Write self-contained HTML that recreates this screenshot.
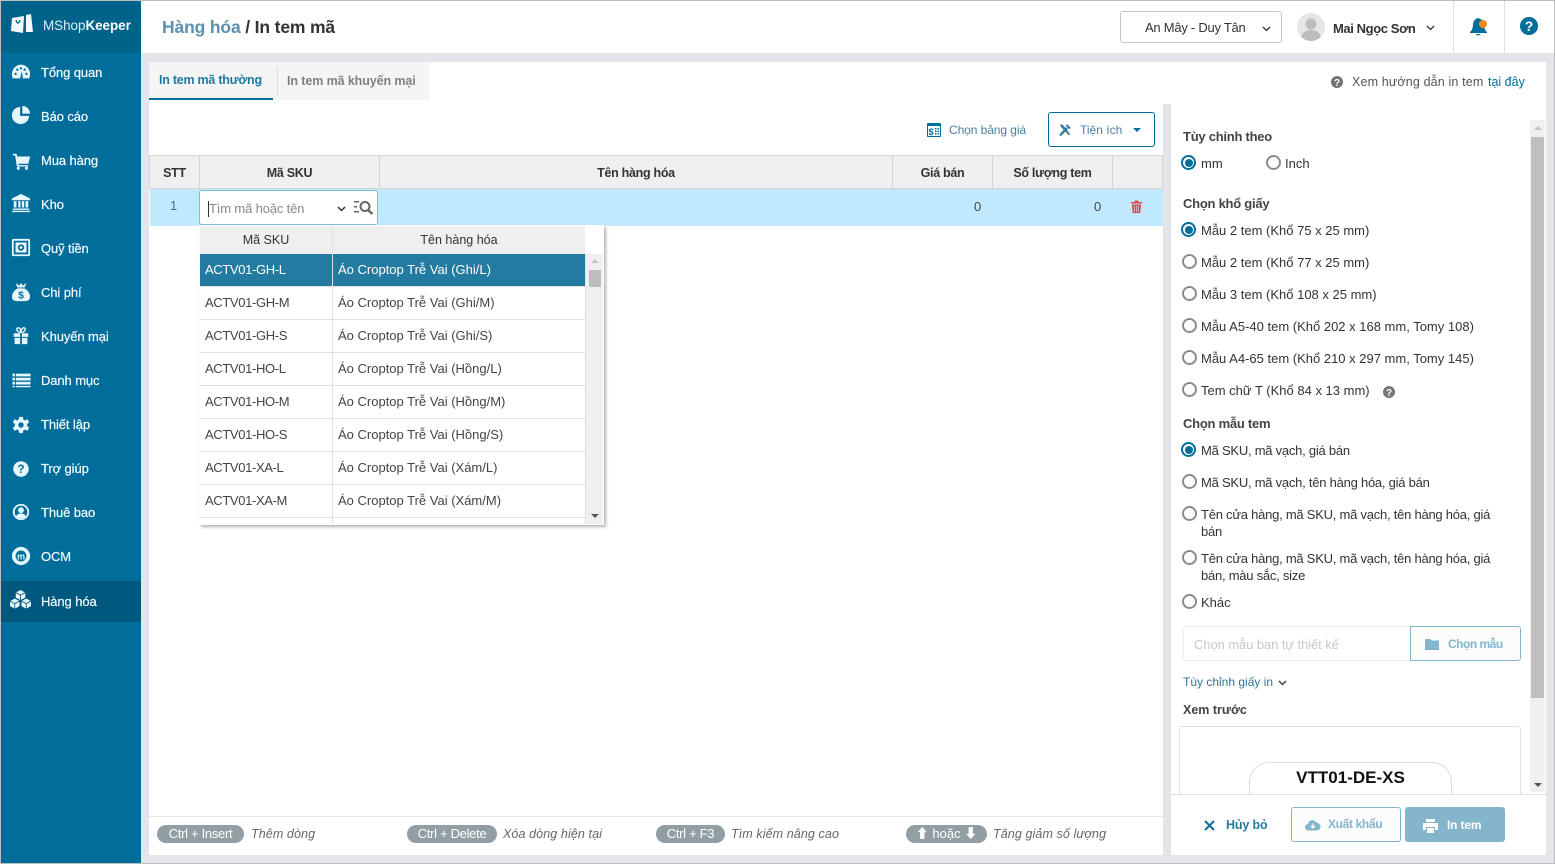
<!DOCTYPE html>
<html lang="vi"><head><meta charset="utf-8"><title>In tem mã</title>
<style>
*{box-sizing:border-box}
html,body{margin:0;padding:0;width:1555px;height:864px;overflow:hidden;background:#e3e5ea;font-family:"Liberation Sans","Noto Sans CJK SC",sans-serif;font-size:13px;color:#333}
.a{position:absolute}
.t{position:absolute;white-space:nowrap;line-height:16px}
.side{left:1px;top:1px;width:140px;height:862px;background:#016d9b}
.m{position:absolute;left:41px;color:#f2fbff;font-size:13px;line-height:16px;white-space:nowrap;letter-spacing:-.1px;-webkit-text-stroke:.2px #f2fbff}
.ic{position:absolute;left:11px;width:20px;height:20px;fill:#e6f7ff}
.b{font-weight:bold}
.r{position:absolute;left:1182px;width:15px;height:15px;border:2px solid #8c8c8c;border-radius:50%;background:#fff}
.r.on{border-color:#016d9b}
.r.on:after{content:"";position:absolute;left:1.500px;top:1.500px;width:8px;height:8px;border-radius:50%;background:#016d9b}
.rt{position:absolute;left:1201px;font-size:13px;line-height:17px;color:#333;white-space:nowrap}
.n{letter-spacing:-.24px}
.h{position:absolute;left:1183px;font-weight:bold;font-size:13px;color:#444;line-height:16px;white-space:nowrap;letter-spacing:-.25px}
.th{position:absolute;top:155px;height:34px;background:#efefef;border:1px solid #d4d4d4;border-left:0;text-align:center;font-weight:bold;font-size:12.5px;line-height:35px;color:#333;letter-spacing:-.3px}
.row{position:absolute;left:200px;width:385px;height:33px;border-bottom:1px solid #e0e0e0;color:#444;font-size:13px;line-height:31px;white-space:nowrap}
.row span{position:absolute;top:0}
.row .c1{left:5px;letter-spacing:-.36px}.row .c2{left:138px}
.key{position:absolute;top:825px;height:18px;border-radius:9px;background:#919fa5;color:#fff;font-size:13px;letter-spacing:-.3px;line-height:18px;text-align:center;white-space:nowrap}
.kt{position:absolute;top:825px;color:#666;font-style:italic;font-size:12.5px;letter-spacing:.1px;line-height:18px;white-space:nowrap}
</style></head><body>
<div class="a" style="left:0;top:0;width:1555px;height:864px;border:1px solid #bdbdbd;z-index:9;pointer-events:none"></div>

<!-- sidebar -->
<div class="a side"></div>
<div class="a" style="left:1px;top:1px;width:140px;height:52px;background:#006389"></div>
<svg class="a" style="left:11px;top:14px" width="23" height="20" viewBox="0 0 23 20"><path d="M1 4 L13 2 L12 19 L0 17 Z M15 1 L20 0 L22 18 L15 18 Z" fill="#f3fbff"/><path d="M5 6 Q7 12 9 6" stroke="#006389" stroke-width="1.300" fill="none"/></svg>
<div class="t" style="left:43px;top:18px;color:#dbeef7;font-size:13.4px">MShop<b style="color:#fff">Keeper</b></div>

<svg class="ic" style="top:62px" viewBox="0 0 22 22"><path d="M2 18 A10 10.500 0 1 1 20 18 Z"/><g fill="#016d9b"><circle cx="5" cy="13" r="1.300"/><circle cx="7" cy="8.500" r="1.300"/><circle cx="11" cy="7" r="1.300"/><circle cx="15" cy="8.500" r="1.300"/><circle cx="17" cy="13" r="1.300"/><path d="M10 18 L12 10 L13 18Z"/></g></svg>
<div class="m" style="top:65px">Tổng quan</div>
<svg class="ic" style="top:105px" viewBox="0 0 22 22"><path d="M10 2 V12 H20 A9.500 9.500 0 1 1 10 2Z"/><path d="M12.500 1 A9 9 0 0 1 21 9.500 H12.500Z"/></svg>
<div class="m" style="top:109px">Báo cáo</div>
<svg class="ic" style="top:151px" viewBox="0 0 22 22"><path d="M2 3 H6 L7 6 H21 L19 14 H8 L8.500 15.500 H19 V17 H6.500 L4.500 5 H2Z"/><circle cx="8" cy="19" r="1.700"/><circle cx="17" cy="19" r="1.700"/></svg>
<div class="m" style="top:153px">Mua hàng</div>
<svg class="ic" style="top:193px" viewBox="0 0 22 22"><path d="M11 1 L21 6 V8 H1 V6Z M3 9 H6 V16 H3Z M8 9 H10.500 V16 H8Z M12 9 H14.500 V16 H12Z M16 9 H19 V16 H16Z M2 17 H20 V18.500 H2Z M1 19.500 H21 V21 H1Z"/></svg>
<div class="m" style="top:197px">Kho</div>
<svg class="ic" style="top:238px" viewBox="0 0 22 22"><path fill-rule="evenodd" d="M3 1 H19 Q21 1 21 3 V18 Q21 20 19 20 H3 Q1 20 1 18 V3 Q1 1 3 1Z M3 3 V18 H19 V3Z"/><path fill-rule="evenodd" d="M5 5 H17 V16 H5Z M11 7 A3.500 3.500 0 1 0 11 14 A3.500 3.500 0 1 0 11 7Z M11 9 A1.500 1.500 0 1 1 11 12 A1.500 1.500 0 1 1 11 9Z"/></svg>
<div class="m" style="top:241px">Quỹ tiền</div>
<svg class="ic" style="top:282px" viewBox="0 0 22 22"><path d="M5 1 L9 4 L11 1 L13 4 L17 1 L15 6 H7Z"/><path d="M7 7 H15 Q21 11 21 16 Q21 21 16 21 H6 Q1 21 1 16 Q1 11 7 7Z"/><text x="11" y="18" font-size="11" font-weight="bold" text-anchor="middle" fill="#016d9b" font-family="Liberation Sans">$</text></svg>
<div class="m" style="top:285px">Chi phí</div>
<svg class="ic" style="top:326px" viewBox="0 0 22 22"><path d="M3 8 H10 V12 H3Z M12 8 H19 V12 H12Z M4 13 H10 V20 H4Z M12 13 H18 V20 H12Z"/><path d="M11 7 C6 7 5 2 8 2 C10 2 11 5 11 7 C11 5 12 2 14 2 C17 2 16 7 11 7Z" fill="none" stroke="#e6f7ff" stroke-width="1.600"/></svg>
<div class="m" style="top:329px">Khuyến mại</div>
<svg class="ic" style="top:370px;left:11px;width:21px" viewBox="0 0 22 22"><path d="M1 4 H4 V7 H1Z M5 4 H21 V7 H5Z M1 8.500 H4 V11.500 H1Z M5 8.500 H21 V11.500 H5Z M1 13 H4 V16 H1Z M5 13 H21 V16 H5Z"/><path d="M1 17.500 H4 V19 H1Z M5 17.500 H21 V19 H5Z"/></svg>
<div class="m" style="top:373px">Danh mục</div>
<svg class="ic" style="top:415px" viewBox="0 0 22 22"><path fill-rule="evenodd" d="M9 2 H13 L13.500 5 L15.500 6 L18 4.500 L20 8 L17.800 9.800 V12.200 L20 14 L18 17.500 L15.500 16 L13.500 17 L13 20 H9 L8.500 17 L6.500 16 L4 17.500 L2 14 L4.200 12.200 V9.800 L2 8 L4 4.500 L6.500 6 L8.500 5Z M11 8 A3 3 0 1 0 11 14 A3 3 0 1 0 11 8Z"/></svg>
<div class="m" style="top:417px">Thiết lập</div>
<svg class="ic" style="top:459px" viewBox="0 0 22 22"><circle cx="11" cy="11" r="8.500"/><text x="11" y="15.500" font-size="13" font-weight="bold" text-anchor="middle" fill="#016d9b" font-family="Liberation Sans">?</text></svg>
<div class="m" style="top:461px">Trợ giúp</div>
<svg class="ic" style="top:502px" viewBox="0 0 22 22"><circle cx="11" cy="11" r="8" fill="none" stroke="#e6f7ff" stroke-width="2"/><circle cx="11" cy="9" r="3.200"/><path d="M5.500 16 Q7 12.500 11 12.500 Q15 12.500 16.500 16 Q11 20 5.500 16Z"/></svg>
<div class="m" style="top:505px">Thuê bao</div>
<svg class="ic" style="top:546px" viewBox="0 0 22 22"><path fill-rule="evenodd" d="M11 1 A10 10 0 1 1 11 21 A10 10 0 1 1 11 1Z M11 5 A6 6 0 1 0 11 17 A6 6 0 1 0 11 5Z"/><text x="11" y="15" font-size="10" font-weight="bold" text-anchor="middle" font-family="Liberation Sans">m</text></svg>
<div class="m" style="top:549px">OCM</div>
<div class="a" style="left:1px;top:581px;width:140px;height:41px;background:#01587e"></div>
<svg class="ic" style="top:590px;left:9px;width:23px;height:19px" viewBox="0 0 23 20"><path d="M11.500 0 L16.500 2.700 V8 L11.500 10.700 L6.500 8 V2.700Z M5.500 9 L10.500 11.700 V17 L5.500 19.700 L0.500 17 V11.700Z M17.500 9 L22.500 11.700 V17 L17.500 19.700 L12.500 17 V11.700Z"/><path d="M6.500 2.700 L11.500 5.400 L16.500 2.700 M11.500 5.400 V10.700 M0.500 11.700 L5.500 14.400 L10.500 11.700 M5.500 14.400 V19.700 M12.500 11.700 L17.500 14.400 L22.500 11.700 M17.500 14.400 V19.700" stroke="#01587e" stroke-width=".9" fill="none"/></svg>
<div class="m" style="top:594px">Hàng hóa</div>

<!-- header -->
<div class="a" style="left:141px;top:1px;width:1413px;height:52px;background:#fff"></div>
<div class="t" style="left:162px;top:16px;font-size:17.5px;letter-spacing:-.15px;line-height:22px;font-weight:bold;color:#5c90ad">Hàng hóa <span style="color:#333">/ In tem mã</span></div>
<div class="a" style="left:1120px;top:11px;width:162px;height:32px;border:1px solid #c6c6c6;border-radius:3px"></div>
<div class="t" style="left:1145px;top:20px;color:#333;font-size:13px;letter-spacing:-.25px">An Mây - Duy Tân</div>
<svg class="a" style="left:1261px;top:25px" width="11" height="8"><path d="M2 2 L5.500 5.500 L9 2" fill="none" stroke="#333" stroke-width="1.300"/></svg>
<svg class="a" style="left:1297px;top:13px" width="28" height="28" viewBox="0 0 28 28"><circle cx="14" cy="14" r="14" fill="#e6e6e6"/><circle cx="14" cy="11" r="5.500" fill="#bdbdbd"/><path d="M4 24 Q6 17 14 17 Q22 17 24 24 Q14 32 4 24Z" fill="#bdbdbd"/></svg>
<div class="t" style="left:1333px;top:21px;font-weight:bold;color:#333;font-size:13px;letter-spacing:-.4px">Mai Ngọc Sơn</div>
<svg class="a" style="left:1425px;top:24px" width="11" height="8"><path d="M2 2 L5.500 5.500 L9 2" fill="none" stroke="#333" stroke-width="1.300"/></svg>
<div class="a" style="left:1453px;top:1px;width:1px;height:52px;background:#e0e0e0"></div>
<div class="a" style="left:1504px;top:1px;width:1px;height:52px;background:#e0e0e0"></div>
<svg class="a" style="left:1469px;top:17px" width="20" height="20" viewBox="0 0 20 20"><path d="M9 1 Q14 2 15 7 Q15 13 18 15 V16 H1 V15 Q4 13 4 7 Q5 2 9 1Z M6.500 17 H12 Q9 20 6.500 17Z" fill="#016d9b"/><circle cx="14" cy="7" r="4" fill="#f08a1c"/></svg>
<svg class="a" style="left:1520px;top:17px" width="18" height="18"><circle cx="9" cy="9" r="9" fill="#016d9b"/><text x="9" y="14" font-size="14" font-weight="bold" text-anchor="middle" fill="#fff" font-family="Liberation Sans">?</text></svg>

<!-- main panel -->
<div class="a" style="left:149px;top:62px;width:1014px;height:793px;background:#fff"></div>
<div class="a" style="left:1171px;top:104px;width:375px;height:751px;background:#fff"></div>
<div class="a" style="left:1163px;top:62px;width:383px;height:42px;background:#fff"></div>
<div class="a" style="left:149px;top:62px;width:281px;height:38px;background:#f5f5f5"></div>
<div class="a" style="left:149px;top:98px;width:124px;height:2px;background:#016d9b"></div>
<div class="a" style="left:277px;top:67px;width:1px;height:28px;background:#ddd"></div>
<div class="t" style="left:159px;top:72px;font-weight:bold;color:#1f7aa0;font-size:12.5px;letter-spacing:-.25px">In tem mã thường</div>
<div class="t" style="left:287px;top:73px;font-weight:bold;color:#808080;font-size:12.5px;letter-spacing:-.1px">In tem mã khuyến mại</div>
<svg class="a" style="left:1331px;top:76px" width="12" height="12"><circle cx="6" cy="6" r="6" fill="#757575"/><text x="6" y="10" font-size="10" font-weight="bold" text-anchor="middle" fill="#fff" font-family="Liberation Sans">?</text></svg>
<div class="t" style="left:1352px;top:74px;color:#555;font-size:12.5px;letter-spacing:.15px">Xem hướng dẫn in tem</div>
<div class="t" style="left:1488px;top:74px;color:#016d9b;font-size:12.5px">tại đây</div>

<svg class="a" style="left:927px;top:123px" width="14" height="14" viewBox="0 0 14 14"><path fill-rule="evenodd" d="M1 0 H13 Q14 0 14 1 V13 Q14 14 13 14 H1 Q0 14 0 13 V1 Q0 0 1 0Z M1 3 V13 H13 V3Z" fill="#016d9b"/><text x="4" y="12" font-size="9" font-weight="bold" text-anchor="middle" fill="#016d9b" font-family="Liberation Sans">$</text><path d="M8 5 H9.500 V6.500 H8Z M10.500 5 H12 V6.500 H10.500Z M8 7.500 H9.500 V9 H8Z M10.500 7.500 H12 V9 H10.500Z M8 10 H9.500 V11.500 H8Z M10.500 10 H12 V11.500 H10.500Z" fill="#016d9b"/></svg>
<div class="t" style="left:949px;top:122px;color:#47819f;font-size:12px;letter-spacing:-.08px">Chọn bảng giá</div>
<div class="a" style="left:1048px;top:112px;width:107px;height:35px;border:1px solid #016d9b;border-radius:3px"></div>
<svg class="a" style="left:1058px;top:123px" width="14" height="13" viewBox="0 0 14 13"><path d="M1 12 L8 4 L10 6 L3 13Z M9 1 L13 5 L11 6 L8 3Z M2 1 L5 2 L12 11 L11 12.500 L3 4Z" fill="#37799a"/></svg>
<div class="t" style="left:1080px;top:122px;color:#47819f;font-size:12px">Tiện ích</div>
<div class="a" style="left:1133px;top:128px;border:4px solid transparent;border-top:4px solid #016d9b;border-bottom:0"></div>

<!-- table -->
<div class="th" style="left:149px;width:51px;border-left:1px solid #d4d4d4">STT</div>
<div class="th" style="left:200px;width:180px">Mã SKU</div>
<div class="th" style="left:380px;width:513px">Tên hàng hóa</div>
<div class="th" style="left:893px;width:100px">Giá bán</div>
<div class="th" style="left:993px;width:120px">Số lượng tem</div>
<div class="th" style="left:1113px;width:50px"></div>
<div class="a" style="left:150px;top:189px;width:1013px;height:37px;background:#c1e9fd"></div>
<div class="t" style="left:170px;top:198px;color:#3f6f85;font-size:13px">1</div>
<div class="t" style="left:974px;top:199px;color:#444;font-size:13px">0</div>
<div class="t" style="left:1094px;top:199px;color:#444;font-size:13px">0</div>
<svg class="a" style="left:1131px;top:200px" width="11" height="13" viewBox="0 0 11 13"><path d="M0 2 H3.500 L4 0.500 H7 L7.500 2 H11 V3.500 H0Z M1 4.500 H10 L9.300 13 H1.700Z" fill="#e0424a"/><path d="M3.600 5.500 V12 M5.500 5.500 V12 M7.400 5.500 V12" stroke="#c1e9fd" stroke-width=".7"/></svg>

<!-- dropdown -->
<div class="a" style="left:199px;top:225px;width:405px;height:300px;background:#fff;box-shadow:2px 2px 3px rgba(0,0,0,.3)"></div>
<div class="a" style="left:200px;top:226px;width:385px;height:28px;background:#efefef"></div>
<div class="t" style="left:200px;top:232px;width:132px;text-align:center;color:#333;font-size:12.5px">Mã SKU</div>
<div class="t" style="left:333px;top:232px;width:252px;text-align:center;color:#333;font-size:12.5px">Tên hàng hóa</div>
<div class="row" style="top:254px;background:#237ba1;color:#fff"><span class="c1">ACTV01-GH-L</span><span class="c2">Áo Croptop Trễ Vai (Ghi/L)</span></div>
<div class="row" style="top:287px"><span class="c1">ACTV01-GH-M</span><span class="c2">Áo Croptop Trễ Vai (Ghi/M)</span></div>
<div class="row" style="top:320px"><span class="c1">ACTV01-GH-S</span><span class="c2">Áo Croptop Trễ Vai (Ghi/S)</span></div>
<div class="row" style="top:353px"><span class="c1">ACTV01-HO-L</span><span class="c2">Áo Croptop Trễ Vai (Hồng/L)</span></div>
<div class="row" style="top:386px"><span class="c1">ACTV01-HO-M</span><span class="c2">Áo Croptop Trễ Vai (Hồng/M)</span></div>
<div class="row" style="top:419px"><span class="c1">ACTV01-HO-S</span><span class="c2">Áo Croptop Trễ Vai (Hồng/S)</span></div>
<div class="row" style="top:452px"><span class="c1">ACTV01-XA-L</span><span class="c2">Áo Croptop Trễ Vai (Xám/L)</span></div>
<div class="row" style="top:485px"><span class="c1">ACTV01-XA-M</span><span class="c2">Áo Croptop Trễ Vai (Xám/M)</span></div>
<div class="a" style="left:332px;top:226px;width:1px;height:298px;background:#e0e0e0"></div>
<div class="a" style="left:585px;top:254px;width:18px;height:270px;background:#f0f0f0;border-left:1px solid #e0e0e0"></div>
<div class="a" style="left:589px;top:270px;width:12px;height:17px;background:#bdbdbd"></div>
<div class="a" style="left:591px;top:259px;border:4px solid transparent;border-bottom:4px solid #c4c4c4;border-top:0"></div>
<div class="a" style="left:591px;top:514px;border:4px solid transparent;border-top:4px solid #555;border-bottom:0"></div>

<div class="a" style="left:199px;top:190px;width:179px;height:35px;background:#fff;border:1px solid #7fb8e0;border-radius:3px"></div>
<div class="a" style="left:208px;top:201px;width:1px;height:16px;background:#333"></div>
<div class="t" style="left:209px;top:201px;color:#888;font-size:13px;letter-spacing:-.15px">Tìm mã hoặc tên</div>
<svg class="a" style="left:336px;top:205px" width="11" height="8"><path d="M2 2 L5.500 5.500 L9 2" fill="none" stroke="#333" stroke-width="1.500"/></svg>
<svg class="a" style="left:354px;top:200px" width="20" height="15" viewBox="0 0 20 15"><path d="M0 1 H5 V2.500 H0Z M0 6 H3 V7.500 H0Z M0 11 H5 V12.500 H0Z" fill="#666"/><circle cx="11" cy="6.500" r="4.500" fill="none" stroke="#666" stroke-width="2"/><path d="M14 10 L18.500 14" stroke="#666" stroke-width="2.500"/></svg>

<!-- shortcuts -->
<div class="a" style="left:149px;top:816px;width:1014px;height:1px;background:#e6e6e6"></div>
<div class="key" style="left:157px;width:87px">Ctrl + Insert</div><div class="kt" style="left:251px">Thêm dòng</div>
<div class="key" style="left:407px;width:90px">Ctrl + Delete</div><div class="kt" style="left:503px">Xóa dòng hiện tại</div>
<div class="key" style="left:656px;width:69px">Ctrl + F3</div><div class="kt" style="left:731px">Tìm kiếm nâng cao</div>
<div class="key" style="left:906px;width:81px;letter-spacing:0">⬆ hoặc ⬇</div><div class="kt" style="left:993px">Tăng giảm số lượng</div>

<!-- right panel -->
<div class="a" style="left:1530px;top:120px;width:15px;height:672px;background:#f0f0f0"></div>
<div class="a" style="left:1531px;top:137px;width:13px;height:561px;background:#bfbfbf"></div>
<div class="a" style="left:1534px;top:126px;border:4px solid transparent;border-bottom:4px solid #c4c4c4;border-top:0"></div>
<div class="a" style="left:1534px;top:783px;border:4px solid transparent;border-top:4px solid #555;border-bottom:0"></div>

<div class="h" style="top:129px">Tùy chỉnh theo</div>
<div class="r on" style="top:155px;left:1181px"></div><div class="rt" style="top:155px">mm</div>
<div class="r" style="top:155px;left:1266px"></div><div class="rt" style="top:155px;left:1285px">Inch</div>

<div class="h" style="top:196px">Chọn khổ giấy</div>
<div class="r on" style="top:222px;left:1181px"></div><div class="rt" style="top:222px">Mẫu 2 tem (Khổ 75 x 25 mm)</div>
<div class="r" style="top:254px"></div><div class="rt" style="top:254px">Mẫu 2 tem (Khổ 77 x 25 mm)</div>
<div class="r" style="top:286px"></div><div class="rt" style="top:286px">Mẫu 3 tem (Khổ 108 x 25 mm)</div>
<div class="r" style="top:318px"></div><div class="rt" style="top:318px">Mẫu A5-40 tem (Khổ 202 x 168 mm, Tomy 108)</div>
<div class="r" style="top:350px"></div><div class="rt" style="top:350px">Mẫu A4-65 tem (Khổ 210 x 297 mm, Tomy 145)</div>
<div class="r" style="top:382px"></div><div class="rt" style="top:382px">Tem chữ T (Khổ 84 x 13 mm)</div>
<svg class="a" style="left:1383px;top:386px" width="12" height="12"><circle cx="6" cy="6" r="6" fill="#757575"/><text x="6" y="10" font-size="10" font-weight="bold" text-anchor="middle" fill="#fff" font-family="Liberation Sans">?</text></svg>

<div class="h" style="top:416px">Chọn mẫu tem</div>
<div class="r on" style="top:442px;left:1181px"></div><div class="rt n" style="top:442px">Mã SKU, mã vạch, giá bán</div>
<div class="r" style="top:474px"></div><div class="rt n" style="top:474px">Mã SKU, mã vạch, tên hàng hóa, giá bán</div>
<div class="r" style="top:506px"></div><div class="rt n" style="top:506px">Tên cửa hàng, mã SKU, mã vạch, tên hàng hóa, giá<br>bán</div>
<div class="r" style="top:550px"></div><div class="rt n" style="top:550px">Tên cửa hàng, mã SKU, mã vạch, tên hàng hóa, giá<br>bán, màu sắc, size</div>
<div class="r" style="top:594px"></div><div class="rt" style="top:594px">Khác</div>

<div class="a" style="left:1183px;top:626px;width:228px;height:35px;border:1px solid #eee;border-right:0;border-radius:3px 0 0 3px"></div>
<div class="t" style="left:1194px;top:637px;color:#c8c8c8;font-size:13px;letter-spacing:-.08px">Chọn mẫu bạn tự thiết kế</div>
<div class="a" style="left:1410px;top:626px;width:111px;height:35px;background:#fcfcfc;border:1px solid #85b5cd;border-radius:0 3px 3px 0"></div>
<svg class="a" style="left:1425px;top:638px" width="14" height="12" viewBox="0 0 14 12"><path d="M0 1 H5 L6.500 2.500 H14 V12 H0Z" fill="#85b5cd"/></svg>
<div class="t" style="left:1448px;top:636px;color:#85b5cd;font-weight:bold;font-size:12px;letter-spacing:-.5px">Chọn mẫu</div>

<div class="t" style="left:1183px;top:674px;color:#30749a;font-size:12px">Tùy chỉnh giấy in</div>
<svg class="a" style="left:1277px;top:679px" width="11" height="8"><path d="M2 2 L5.500 5.500 L9 2" fill="none" stroke="#333" stroke-width="1.300"/></svg>
<div class="h" style="top:702px;font-size:12.5px;letter-spacing:0">Xem trước</div>
<div class="a" style="left:1179px;top:726px;width:342px;height:69px;border:1px solid #e0e0e0;border-bottom:0;border-radius:3px 3px 0 0"></div>
<div class="a" style="left:1249px;top:762px;width:203px;height:33px;border:1px solid #ddd;border-bottom:0;border-radius:20px 20px 0 0"></div>
<div class="t" style="left:1249px;top:768px;width:203px;text-align:center;color:#111;font-weight:bold;font-size:17px;line-height:20px">VTT01-DE-XS</div>

<div class="a" style="left:1171px;top:794px;width:375px;height:61px;background:#fff;border-top:1px solid #e0e0e0"></div>
<svg class="a" style="left:1204px;top:820px" width="11" height="11"><path d="M1 1 L10 10 M10 1 L1 10" stroke="#0f6e98" stroke-width="2"/></svg>
<div class="t" style="left:1226px;top:817px;color:#2a7aa0;font-weight:bold;font-size:12.5px;letter-spacing:-.15px">Hủy bỏ</div>
<div class="a" style="left:1291px;top:807px;width:110px;height:35px;background:#fcfcfc;border:1px solid #85b5cd;border-radius:3px"></div>
<svg class="a" style="left:1305px;top:819px" width="16" height="12" viewBox="0 0 16 12"><path d="M3.500 11.500 A3.200 3.200 0 0 1 3 5 A4.500 4.500 0 0 1 11.500 3.800 A3.900 3.900 0 0 1 12.500 11.500Z" fill="#85b5cd"/><path d="M8 4.500 V9 M6 7 L8 9 L10 7" stroke="#fff" stroke-width="1.300" fill="none"/></svg>
<div class="t" style="left:1328px;top:816px;color:#85b5cd;font-weight:bold;font-size:12px;letter-spacing:-.35px">Xuất khẩu</div>
<div class="a" style="left:1405px;top:807px;width:100px;height:35px;background:#85b5cd;border-radius:3px"></div>
<svg class="a" style="left:1423px;top:819px" width="15" height="14" viewBox="0 0 15 14"><path d="M3 0 H12 V3 H3Z M0 4 H15 V11 H12 V8 H3 V11 H0Z M4 9 H11 V14 H4Z" fill="#fff"/></svg>
<div class="t" style="left:1447px;top:817px;color:#fff;font-weight:bold;font-size:12px;letter-spacing:-.15px">In tem</div>
</body></html>
